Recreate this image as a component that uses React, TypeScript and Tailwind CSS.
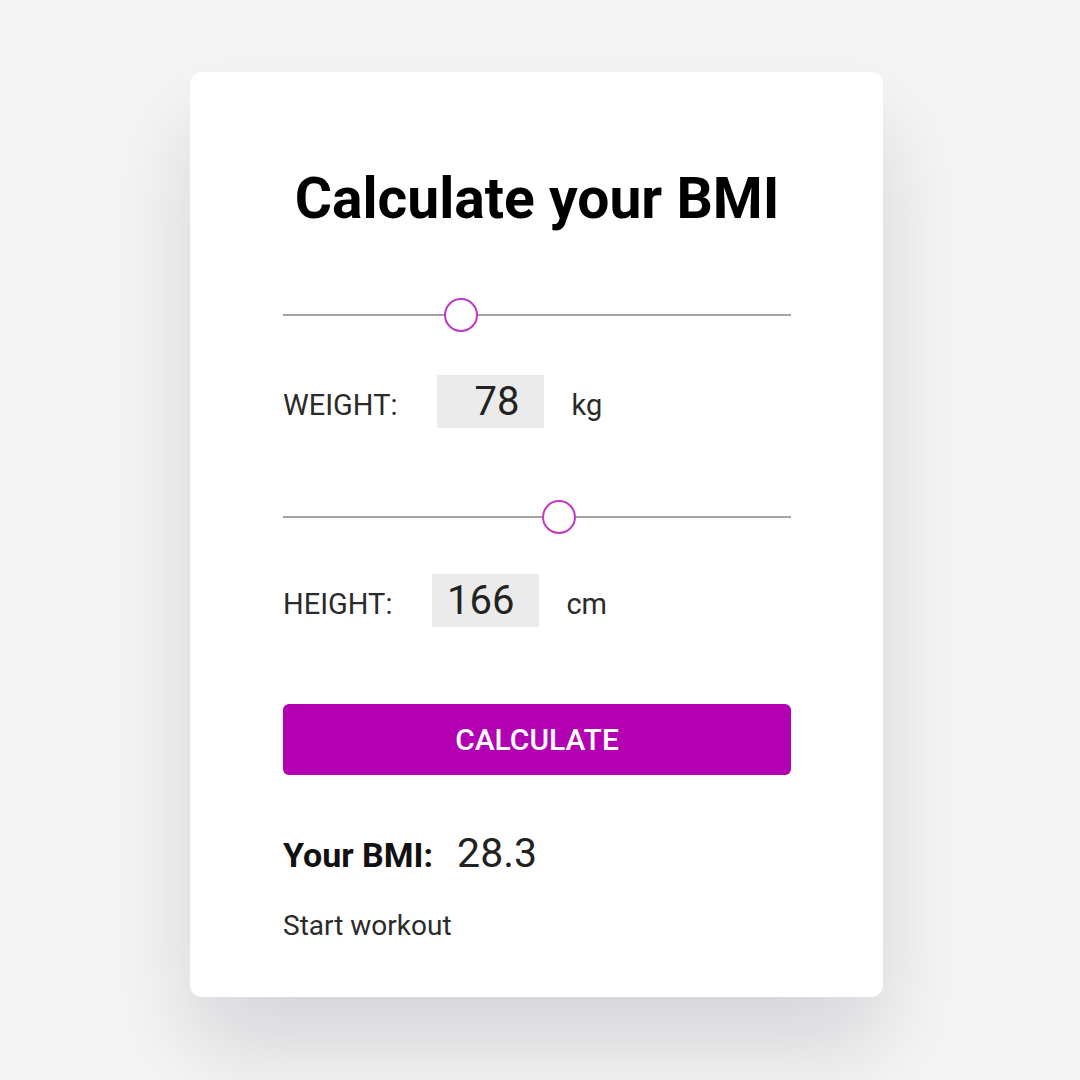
import { useState } from "react";

// thumb travel matches a native range input: 17px inset on both ends
function Slider({
  value,
  min,
  max,
}: {
  value: number;
  min: number;
  max: number;
}) {
  const frac = (value - min) / (max - min);

  return (
    <div className="relative h-[34px] w-full">
      <div className="absolute left-0 right-0 top-[16px] h-[2px] bg-[#a3a3a3]" />
      <div
        className="absolute top-0 h-[34px] w-[34px] rounded-full border-2 border-[#c238c2] bg-white"
        style={{ left: `calc(${frac} * (100% - 34px))` }}
      />
    </div>
  );
}

function ValueRow({
  label,
  value,
  unit,
}: {
  label: string;
  value: number;
  unit: string;
}) {
  return (
    <div className="flex items-baseline text-[29px] leading-none text-[#2b2b2b]">
      <span className="mr-[40px]">{label}</span>
      <span className="block h-[53px] w-[107px] bg-[#ebebeb] pr-[25px] text-right text-[40px] leading-[53px] text-[#222]">
        {value}
      </span>
      <span className="ml-[27px]">{unit}</span>
    </div>
  );
}

export default function App() {
  const [weight] = useState(78);
  const [height] = useState(166);
  const [bmi, setBmi] = useState(28.3);

  const calculate = () => {
    const m = height / 100;
    setBmi(Math.round((weight / (m * m)) * 10) / 10);
  };

  return (
    <div className="min-h-[1080px] bg-[#f5f5f5] pl-[190px] pt-[72px] font-['Roboto',sans-serif]">
      <div className="flex h-[925px] w-[693px] flex-col rounded-[12px] bg-white pl-[93px] pr-[92px] pt-[99px] shadow-[0_50px_90px_rgba(20,20,40,0.14)]">
        {/* Title */}
        <h1 className="text-center text-[57px] font-bold leading-[56px] text-black">
          Calculate your BMI
        </h1>

        {/* Weight */}
        <div className="mt-[71px]">
          <Slider value={weight} min={30} max={171} />
        </div>
        <div className="mt-[43px]">
          <ValueRow label="WEIGHT:" value={weight} unit="kg" />
        </div>

        {/* Height */}
        <div className="mt-[72px]">
          <Slider value={height} min={90} max={229} />
        </div>
        <div className="mt-[40px]">
          <ValueRow label="HEIGHT:" value={height} unit="cm" />
        </div>

        <button
          onClick={calculate}
          className="mt-[77px] h-[71px] w-full rounded-[6px] bg-[#b300b3] text-[30px] font-medium text-white"
        >
          CALCULATE
        </button>

        {/* Result */}
        <div className="mt-[58px] flex items-baseline leading-none text-[#111]">
          <span className="text-[34px] font-bold">Your BMI:</span>
          <span className="ml-[24px] text-[41px] text-[#222]">{bmi}</span>
        </div>
        <p className="mt-[38px] text-[28px] leading-none text-[#2b2b2b]">
          Start workout
        </p>
      </div>
    </div>
  );
}
